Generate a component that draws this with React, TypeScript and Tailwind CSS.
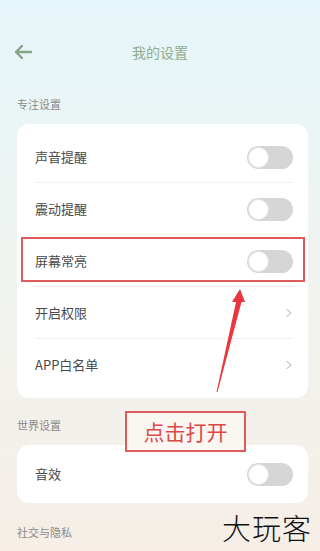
import React from "react";

const font = { fontFamily: '"Noto Sans CJK SC", "Noto Sans", sans-serif' };

function Toggle() {
  return (
    <div className="w-[46px] h-[23px] rounded-full bg-[#d6d6d6] flex items-center pl-[1px]">
      <div className="w-[21px] h-[21px] rounded-full bg-white border border-[#e2e2e2]" />
    </div>
  );
}

function Chevron() {
  return (
    <svg width="8" height="10" viewBox="0 0 8 10">
      <path d="M2 1.5 L6 5 L2 8.5" fill="none" stroke="#cfcfcf" strokeWidth="1.4" strokeLinecap="round" strokeLinejoin="round" />
    </svg>
  );
}

function Row({ label, right, divider }: { label: string; right: "toggle" | "chev"; divider?: boolean }) {
  return (
    <div className="relative h-[52px] pl-[18px] pr-[15px] flex items-center justify-between">
      <span className="text-[13px] text-[#4a4a4a]">{label}</span>
      {right === "toggle" ? <Toggle /> : <Chevron />}
      {divider && <div className="absolute left-[18px] right-[15px] bottom-0 h-px bg-[#f0f0f0]" />}
    </div>
  );
}

export default function App() {
  return (
    <div
      className="relative w-[320px] h-[551px] overflow-hidden bg-gradient-to-b from-[#e5f6fa] via-[#f0f3ef] to-[#f6eee7]"
      style={font}
    >
      <div className="mt-[36px] h-[32px] grid grid-cols-[48px_1fr_48px] items-center">
        <div className="pl-[13px] flex items-center">
          <svg width="20" height="16" viewBox="0 0 20 16">
            <path d="M18 8 H3 M9 2 L3 8 L9 14" fill="none" stroke="#86a686" strokeWidth="2.4" strokeLinecap="round" strokeLinejoin="round" />
          </svg>
        </div>
        <div className="text-center text-[14px] text-[#8fac90]">我的设置</div>
        <div />
      </div>

      <div className="mt-[28px] px-[17px] text-[11px] leading-[16px] text-[#8a8a8a]">专注设置</div>
      <div className="mt-[12px] ml-[17px] w-[291px] rounded-[12px] bg-white py-[7px]">
        <Row label="声音提醒" right="toggle" divider />
        <Row label="震动提醒" right="toggle" divider />
        <Row label="屏幕常亮" right="toggle" divider />
        <Row label="开启权限" right="chev" divider />
        <Row label="APP白名单" right="chev" />
      </div>

      <div className="mt-[19px] px-[17px] text-[11px] leading-[16px] text-[#8a8a8a]">世界设置</div>
      <div className="mt-[12px] ml-[17px] w-[291px] rounded-[12px] bg-white py-[3px]">
        <Row label="音效" right="toggle" />
      </div>

      <div className="mt-[21px] px-[17px] text-[11px] leading-[16px] text-[#8a8a8a]">社交与隐私</div>

      {/* annotations */}
      <div className="absolute left-[21px] top-[237px] w-[284px] h-[45px] border-2 border-[#de5b5b]" />
      <svg className="absolute left-0 top-0" width="320" height="551" viewBox="0 0 320 551">
        <path d="M240 289 L245 302 L241.5 302 L217.5 392 L216.5 392 L236 302 L232 302 Z" fill="#e8383d" />
      </svg>
      <div className="absolute left-[125px] top-[411px] w-[121px] h-[41px] border-2 border-[#de5b5b] bg-[#faf7f3] flex items-center justify-center">
        <span className="text-[21px] leading-none text-[#dc4848]">点击打开</span>
      </div>
      <div className="absolute left-[222px] top-[510px] text-[29px] leading-[34px] font-light text-[#111] tracking-[1px]">大玩客</div>
    </div>
  );
}
